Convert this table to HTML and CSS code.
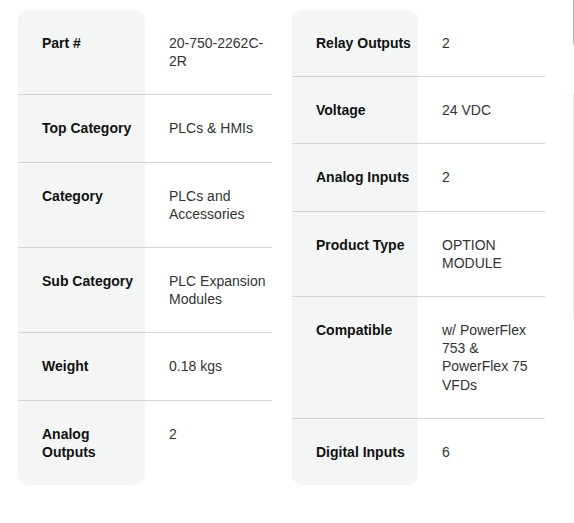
FILE: index.html
```html
<!DOCTYPE html>
<html lang="en">
<head>
<meta charset="utf-8">
<title>Specifications</title>
<link rel="stylesheet" href="styles.css">
</head>
<body>
<div class="page">
  <div class="tables">
    <div class="spec">
      <div class="row"><div class="label">Part #</div><div class="value">20-750-2262C-2R</div></div>
      <div class="row"><div class="label">Top Category</div><div class="value">PLCs &amp; HMIs</div></div>
      <div class="row"><div class="label">Category</div><div class="value">PLCs and Accessories</div></div>
      <div class="row"><div class="label">Sub Category</div><div class="value">PLC Expansion Modules</div></div>
      <div class="row"><div class="label">Weight</div><div class="value">0.18 kgs</div></div>
      <div class="row"><div class="label">Analog Outputs</div><div class="value">2</div></div>
    </div>
    <div class="spec spec-narrow">
      <div class="row"><div class="label">Relay Outputs</div><div class="value">2</div></div>
      <div class="row"><div class="label">Voltage</div><div class="value">24 VDC</div></div>
      <div class="row"><div class="label">Analog Inputs</div><div class="value">2</div></div>
      <div class="row"><div class="label">Product Type</div><div class="value">OPTION MODULE</div></div>
      <div class="row"><div class="label">Compatible</div><div class="value">w/ PowerFlex 753 &amp; PowerFlex 75 VFDs</div></div>
      <div class="row"><div class="label">Digital Inputs</div><div class="value">6</div></div>
    </div>
  </div>
  <div class="edge">
    <div class="edge-top"></div>
    <div class="edge-mid"></div>
  </div>
</div>
</body>
</html>
```
FILE: styles.css
```css
html, body {
  margin: 0;
  padding: 0;
  background: #ffffff;
}
body {
  font-family: "Liberation Sans", Arial, sans-serif;
  font-size: 14px;
  line-height: 1.3;
  color: #333333;
}
.page {
  display: flex;
  justify-content: space-between;
  width: 574px;
  height: 523px;
}
.tables {
  display: flex;
  align-items: flex-start;
  gap: 20px;
  padding: 10px 0 0 18px;
}
.spec {
  display: flex;
  flex-direction: column;
  width: 254px;
}
.row {
  display: grid;
  grid-template-columns: 127px 127px;
  border-bottom: 1px solid #d4d4d4;
}
.spec-narrow {
  width: 253px;
}
.spec-narrow .row {
  grid-template-columns: 126px 127px;
}
.row:last-child {
  border-bottom: none;
}
.label {
  background: #f4f6f6;
  padding: 24px 4px 24px 24px;
  font-weight: bold;
  color: #111111;
}
.row:first-child .label {
  border-radius: 10px 10px 0 0;
}
.row:last-child .label {
  border-radius: 0 0 10px 10px;
}
.value {
  padding: 24px 0 24px 24px;
  color: #333333;
}
.edge {
  width: 1px;
  display: flex;
  flex-direction: column;
}
.edge-top {
  height: 45px;
  background: #b9b9b9;
}
.edge-mid {
  height: 225px;
  margin-top: 48px;
  background: #e6edef;
}
```
